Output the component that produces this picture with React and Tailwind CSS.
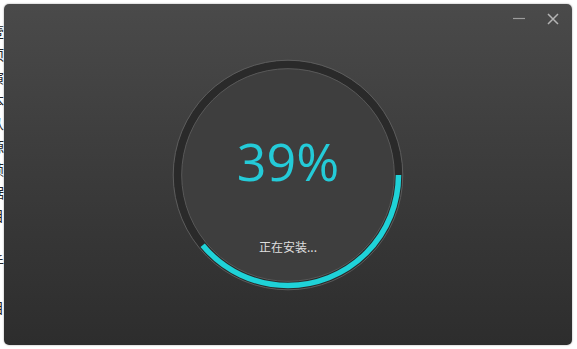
const EDGE = ['壹', '项', '演', '本', '从', '源', '帧', '据', '目', '', '手', 'S', '目', 'C']

function Ring({ percent }) {
  const r = 110.5
  const c = 2 * Math.PI * r
  return (
    <svg className="absolute inset-0" width="232" height="232" viewBox="0 0 232 232">
      <circle cx="116" cy="116" r="106" fill="#3e3e3e" />
      <circle cx="116" cy="116" r="110.5" fill="none" stroke="#2a2a2a" strokeWidth="8" />
      <circle cx="116" cy="116" r="114.8" fill="none" stroke="#5c5c5c" strokeWidth="1" />
      <circle cx="116" cy="116" r="106.3" fill="none" stroke="#585858" strokeWidth="1" />
      <circle
        cx="116"
        cy="116"
        r={r}
        fill="none"
        stroke="#1fd2d8"
        strokeWidth="5.5"
        strokeDasharray={`${(c * percent) / 100} ${c}`}
      />
    </svg>
  )
}

export default function App() {
  return (
    <div className="w-[577px] h-[349px] bg-white flex overflow-hidden font-['Noto_Sans',sans-serif]">
      {/* bits of the page behind the window */}
      <div className="w-[4px] overflow-hidden shrink-0 pt-[20px]">
        <div className="-ml-[10px] flex flex-col text-[14px] leading-[23px] text-[#222] font-['Noto_Sans_CJK_SC',sans-serif]">
          {EDGE.map((ch, i) => (
            <span key={i} className="h-[23px]">{ch}</span>
          ))}
        </div>
      </div>

      <div className="mt-[4px] w-[568px] h-[341px] rounded-[5px] bg-linear-to-b from-[#4a4a4a] via-[#3b3b3b] to-[#2d2d2d] shadow-[0_0_2px_rgba(0,0,0,0.4)] flex flex-col items-center pt-[9px]">
        {/* Window controls */}
        <div className="self-stretch flex justify-end items-start gap-[22px] pr-[13px] h-[12px]">
          <svg width="12" height="12" viewBox="0 0 12 12">
            <line x1="0" y1="5.5" x2="12" y2="5.5" stroke="#9c9c9c" strokeWidth="1.2" />
          </svg>
          <svg width="12" height="12" viewBox="0 0 12 12">
            <path d="M1 1 L11 11 M11 1 L1 11" stroke="#b4b4b4" strokeWidth="1.5" />
          </svg>
        </div>

        <div className="relative mt-[34px] w-[232px] h-[232px]">
          <Ring percent={39} />
          <div className="relative flex flex-col items-center pt-[76px]">
            <span className="text-[52px] leading-[52px] text-[#24cbd8] font-['Open_Sans',sans-serif]">
              39%
            </span>
            <span className="mt-[52px] text-[12px] leading-[16px] text-[#dedede] font-['Noto_Sans_CJK_SC',sans-serif]">
              正在安装...
            </span>
          </div>
        </div>
      </div>
    </div>
  )
}
